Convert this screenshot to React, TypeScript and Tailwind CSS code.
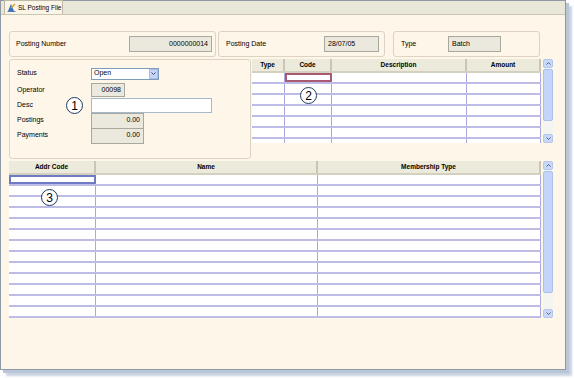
import React from "react";

const font = { fontFamily: '"Liberation Sans", Arial, sans-serif' };

const Circle = ({ n, className }: { n: string; className: string }) => (
  <div
    className={
      "absolute w-[17px] h-[17px] rounded-full border-[1.5px] border-[#1f3a5f] bg-white flex items-center justify-center text-[12px] leading-none text-black " +
      className
    }
  >
    {n}
  </div>
);

const Field = ({ w, value, right = true }: { w: string; value: string; right?: boolean }) => (
  <div
    className={
      "h-[16px] border border-[#a8a89c] bg-[#ebe9dd] text-[7px] flex items-center px-[3px] " +
      w +
      (right ? " justify-end" : " justify-start")
    }
  >
    {value}
  </div>
);

const Scrollbar = ({ thumb }: { thumb: string }) => (
  <div className="w-[10px] h-full flex flex-col bg-[#f4f4f0]">
    <div className="h-[9px] bg-[#c9d8f8] border border-[#b4c6ee] rounded-[2px] flex items-center justify-center">
      <svg width="5" height="3" viewBox="0 0 5 3">
        <path d="M0.5 2.5 L2.5 0.5 L4.5 2.5" stroke="#4d6185" strokeWidth="1" fill="none" />
      </svg>
    </div>
    <div className={"bg-[#c4d4fa] border border-[#adc0ec] rounded-[2px] mt-[1px] " + thumb} />
    <div className="flex-1" />
    <div className="h-[9px] bg-[#c9d8f8] border border-[#b4c6ee] rounded-[2px] flex items-center justify-center">
      <svg width="5" height="3" viewBox="0 0 5 3">
        <path d="M0.5 0.5 L2.5 2.5 L4.5 0.5" stroke="#4d6185" strokeWidth="1" fill="none" />
      </svg>
    </div>
  </div>
);

const Grid = ({
  cols,
  rows,
  height,
  active,
  activeClass,
}: {
  cols: { name: string; w: string }[];
  rows: number;
  height: string;
  active: number;
  activeClass: string;
}) => (
  <div className={"bg-white overflow-hidden flex flex-col " + height}>
    <div className="flex h-[14px] bg-[#ebeadb] border-b-2 border-[#d3d0bf] shrink-0">
      {cols.map((c, i) => (
        <div
          key={i}
          className={
            "flex items-center justify-center text-[6.5px] font-bold border-r-2 border-[#c9c6b6] " + c.w
          }
        >
          {c.name}
        </div>
      ))}
    </div>
    {Array.from({ length: rows }).map((_, r) => (
      <div key={r} className="flex h-[11px] shrink-0 border-b-2 border-[#bcbce6]">
        {cols.map((c, i) => (
          <div
            key={i}
            className={c.w + " " + (r === 0 && i === active ? activeClass : "border-r border-[#a9a9dd]")}
          />
        ))}
      </div>
    ))}
  </div>
);

export default function App() {
  return (
    <div className="w-[574px] h-[378px] bg-white relative" style={font}>
      <div className="w-[566px] h-[370px] border border-[#8f99a6] bg-[#fdf6e9] shadow-[3px_3px_0_#b9c6d8,6px_6px_2px_#c9d3e2] flex flex-col text-black">
        {/* tab strip */}
        <div className="h-[14px] bg-[#e9e7d8] border-b border-[#c9c6b3] flex items-end pl-[3px] shrink-0">
          <div className="h-[14px] w-[59px] bg-[#fbf5e8] border border-b-0 border-[#bdb9a6] flex items-center gap-[2px] px-[2px] text-[6.5px] whitespace-nowrap">
            <svg width="9" height="9" viewBox="0 0 9 9" className="shrink-0">
              <path d="M1 8 L4 1 L7 8 Z" fill="#3b6fc4" />
              <path d="M4 5 L8 1" stroke="#e0a020" strokeWidth="1.4" />
              <path d="M0.5 8.5 H8.5" stroke="#2e5a9e" strokeWidth="0.8" />
            </svg>
            SL Posting File
          </div>
        </div>

        <div className="pl-[8px] pt-[16px] flex flex-col">
          {/* header panels */}
          <div className="flex h-[26px]">
            <div className="w-[207px] rounded-[3px] border border-[#dcd3c2] flex items-center justify-between pl-[6px] pr-[3px] text-[7px]">
              Posting Number
              <Field w="w-[83px]" value="0000000014" />
            </div>
            <div className="w-[167px] ml-[2px] rounded-[3px] border border-[#dcd3c2] flex items-center justify-between pl-[7px] pr-[5px] text-[7px]">
              Posting Date
              <Field w="w-[55px]" value="28/07/05" right={false} />
            </div>
            <div className="w-[147px] ml-[8px] rounded-[3px] border border-[#dcd3c2] flex items-center pl-[7px] text-[7px]">
              <span className="w-[47px]">Type</span>
              <Field w="w-[53px]" value="Batch" right={false} />
            </div>
          </div>

          {/* middle section */}
          <div className="flex mt-[2px] h-[100px]">
            <div className="relative w-[242px] h-[100px] rounded-[3px] border border-[#dcd3c2] pt-[7px] pl-[7px] text-[7px] flex flex-col">
              <div className="flex items-center h-[13px]">
                <span className="w-[74px]">Status</span>
                <div className="w-[68px] h-[12px] bg-white border border-[#7f9db9] flex items-center justify-between pl-[2px]">
                  Open
                  <div className="w-[9px] h-[10px] bg-[#c6d5f7] border border-[#a9bde8] flex items-center justify-center">
                    <svg width="5" height="3" viewBox="0 0 5 3">
                      <path d="M0.5 0.5 L2.5 2.5 L4.5 0.5" stroke="#3d4f78" strokeWidth="1" fill="none" />
                    </svg>
                  </div>
                </div>
              </div>
              <div className="flex items-center h-[16px] mt-[2px]">
                <span className="w-[74px]">Operator</span>
                <div className="w-[34px] h-[14px] border border-[#a8a89c] bg-[#ebe9dd] flex items-center justify-end pr-[3px]">
                  00098
                </div>
              </div>
              <div className="flex items-center h-[15px]">
                <span className="w-[74px]">Desc</span>
                <div className="w-[121px] h-[15px] bg-white border border-[#a6b8cc]" />
              </div>
              <div className="flex items-center h-[15px]">
                <span className="w-[74px]">Postings</span>
                <Field w="w-[53px]" value="0.00" />
              </div>
              <div className="flex items-center h-[15px]">
                <span className="w-[74px]">Payments</span>
                <Field w="w-[53px]" value="0.00" />
              </div>
              <Circle n="1" className="left-[56px] top-[37px]" />
            </div>

            <div className="relative flex h-[84px] ml-[1px]">
              <Grid
                cols={[
                  { name: "Type", w: "w-[33px]" },
                  { name: "Code", w: "w-[47px]" },
                  { name: "Description", w: "w-[135px]" },
                  { name: "Amount", w: "w-[74px]" },
                ]}
                rows={7}
                height="h-[84px]"
                active={1}
                activeClass="border-2 border-[#a85a72]"
              />
              <div className="ml-[2px] h-full">
                <Scrollbar thumb="h-[52px]" />
              </div>
              <Circle n="2" className="left-[48px] top-[28px]" />
            </div>
          </div>

          {/* bottom grid */}
          <div className="relative flex h-[157px] mt-[2px]">
            <Grid
              cols={[
                { name: "Addr Code", w: "w-[87px]" },
                { name: "Name", w: "w-[222px]" },
                { name: "Membership Type", w: "w-[223px]" },
              ]}
              rows={13}
              height="h-[157px]"
              active={0}
              activeClass="border-2 border-[#6f7cc4]"
            />
            <div className="ml-[2px] h-full">
              <Scrollbar thumb="h-[122px]" />
            </div>
            <Circle n="3" className="left-[32px] top-[28px]" />
          </div>
        </div>
      </div>
    </div>
  );
}
